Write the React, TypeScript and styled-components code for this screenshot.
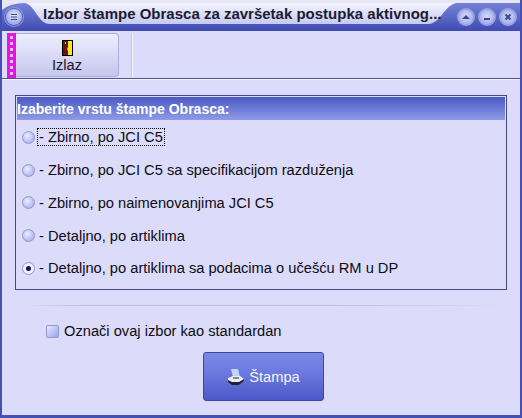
import * as React from 'react';
import styled, { createGlobalStyle } from 'styled-components';

const GlobalStyle = createGlobalStyle`
  html, body { margin: 0; padding: 0; background: #dcdcfa; }
  body { font-family: "Liberation Sans", Arial, sans-serif; color: #000; }
`;

const Window = styled.div`
  width: 522px;
  height: 418px;
  box-sizing: border-box;
  display: flex;
  flex-direction: column;
  background: #dcdcfa;
  border-left: 2px solid #4450b4;
  border-right: 2px solid #4450b4;
  border-bottom: 3px solid #4450b4;
  overflow: hidden;
`;

const TitleBar = styled.div`
  position: relative;
  height: 31px;
  margin: 0 -2px;
  flex: none;
  display: flex;
  align-items: center;
  background: linear-gradient(#7a88dc, #3f4bb0);
`;

const TitleShape = styled.svg`
  position: absolute;
  left: 0;
  top: 0;
`;

const MenuButton = styled.div`
  position: absolute;
  left: 5px;
  top: 8px;
  width: 18px;
  height: 18px;
  border-radius: 50%;
  background: radial-gradient(circle at 50% 40%, #e4e6fa, #9aa5e6 75%);
  border: 1px solid #5c68c4;
  box-shadow: 0 0 0 1px #8d98e2;
  box-sizing: border-box;
  display: flex;
  align-items: center;
  justify-content: center;
`;

const TitleText = styled.div`
  position: relative;
  margin-left: 43px;
  margin-top: -4px;
  font-size: 15px;
  font-weight: bold;
  color: #1c1c30;
  white-space: nowrap;
`;

const Controls = styled.div`
  position: absolute;
  right: 5px;
  top: 8px;
  display: flex;
  gap: 3px;
`;

const ControlButton = styled.div`
  width: 18px;
  height: 18px;
  border-radius: 50%;
  box-sizing: border-box;
  border: 2px solid #98a3e6;
  background: radial-gradient(circle at 50% 45%, #d6d9f6, #a4aeea 80%);
  display: flex;
  align-items: center;
  justify-content: center;
`;

const Toolbar = styled.div`
  flex: none;
  height: 48px;
  display: flex;
  align-items: stretch;
  box-sizing: border-box;
  padding: 2px 0 1px 5px;
  border-bottom: 1px solid #4c5494;
  box-shadow: 0 1px 0 #f2f2ff;
`;

const Grip = styled.svg`
  flex: none;
  width: 9px;
  height: 45px;
  display: block;
`;

const ToolButton = styled.div`
  width: 103px;
  margin-right: 13px;
  box-sizing: border-box;
  border: 1px solid #a9acd8;
  border-left: none;
  border-radius: 0 4px 4px 0;
  background: linear-gradient(#eeeefe, #c6c6ee);
  display: flex;
  flex-direction: column;
  align-items: center;
  font-size: 14.67px;
  padding-top: 6px;
  gap: 1px;
  color: #14142c;
`;

const ToolSeparator = styled.div`
  width: 1px;
  background: #f4f4ff;
  box-shadow: -1px 0 0 #c4c4e6;
`;

const Body = styled.div`
  flex: 1;
  display: flex;
  flex-direction: column;
  padding: 16px 13px 0 13px;
`;

const Group = styled.div`
  height: 195px;
  flex: none;
  box-sizing: border-box;
  border: 1px solid #45497f;
  padding: 1px 1px 0 1px;
`;

const GroupHeader = styled.div`
  height: 23px;
  box-sizing: border-box;
  display: flex;
  align-items: center;
  font-size: 14px;
  font-weight: bold;
  color: #fff;
  background: linear-gradient(#4a58c4, #8f9be8);
`;

const Options = styled.div`
  display: flex;
  flex-direction: column;
  padding: 1px 0 0 5px;
`;

const Option = styled.div`
  height: 32.75px;
  display: flex;
  align-items: center;
  font-size: 14.67px;
  white-space: nowrap;
  color: #0c0c14;
`;

const RadioDot = styled.span<{ $checked?: boolean }>`
  width: 13px;
  height: 13px;
  flex: none;
  margin-right: 3px;
  box-sizing: border-box;
  border-radius: 50%;
  border: 1px solid #8f98cc;
  background: ${p => p.$checked
    ? '#eef0fc'
    : 'radial-gradient(circle at 40% 35%, #eceefc, #a4aef0 85%)'};
  display: flex;
  align-items: center;
  justify-content: center;
  &::after {
    content: '';
    display: ${p => (p.$checked ? 'block' : 'none')};
    width: 5px;
    height: 5px;
    border-radius: 50%;
    background: #14184a;
  }
`;

const OptionLabel = styled.span<{ $focused?: boolean }>`
  outline: ${p => (p.$focused ? '1px dotted #000' : 'none')};
  outline-offset: 0;
  padding: 0 1px;
`;

const Divider = styled.div`
  height: 1px;
  margin: 15px 0 0 12px;
  background: linear-gradient(to right, #dcdcfa, #bcbcd6 12%, #bcbcd6 60%, #dcdcfa);
`;

const CheckRow = styled.div`
  display: flex;
  align-items: center;
  margin: 17px 0 0 31px;
  font-size: 14.67px;
  color: #0c0c14;
`;

const CheckBox = styled.span`
  width: 13px;
  height: 13px;
  margin-right: 5px;
  box-sizing: border-box;
  border: 1px solid #8f98cc;
  border-radius: 2px;
  background: linear-gradient(135deg, #e6e8fc, #98a4ee);
`;

const PrintRow = styled.div`
  display: flex;
  margin: 13px 0 0 188px;
`;

const PrintButton = styled.div`
  width: 121px;
  height: 49px;
  box-sizing: border-box;
  border: 1px solid #3d46a0;
  border-radius: 3px;
  background: linear-gradient(#7c88e6, #6a77de 45%, #4c58c8);
  color: #f4f4ff;
  font-size: 14.67px;
  display: flex;
  align-items: center;
  justify-content: center;
  gap: 4px;
`;

const RADIO_OPTIONS = [
  { label: '- Zbirno, po JCI C5', focused: true },
  { label: '- Zbirno, po JCI C5 sa specifikacijom razduženja' },
  { label: '- Zbirno, po naimenovanjima JCI C5' },
  { label: '- Detaljno, po artiklima' },
  { label: '- Detaljno, po artiklima sa podacima o učešću RM u DP', checked: true },
];

export default function App() {
  return (
    <>
      <GlobalStyle />
      <Window>
        <TitleBar>
          <TitleShape width="522" height="31" viewBox="0 0 522 31">
            <defs>
              <linearGradient id="tab" x1="0" y1="0" x2="0" y2="1">
                <stop offset="0" stopColor="#f4f4fe" />
                <stop offset="1" stopColor="#c6c9f2" />
              </linearGradient>
            </defs>
            {/* pale top edge and the rounded corner of the window */}
            <path d="M0 0H522V3H456L25 3Q8 3 0 12Z" fill="#e6e6f6" />
            {/* the tab the title sits on */}
            <path d="M25 3 L456 3 C444 6 440 24 428 24 L50 24 C38 24 36 6 25 3 Z" fill="url(#tab)" />
          </TitleShape>
          <MenuButton>
            <svg width="8" height="8" viewBox="0 0 8 8">
              <path d="M1 1.5H7M1 4H7M1 6.5H7" stroke="#3c4690" strokeWidth="1" />
            </svg>
          </MenuButton>
          <TitleText>Izbor štampe Obrasca za završetak postupka aktivnog...</TitleText>
          <Controls>
            <ControlButton>
              <svg width="8" height="6" viewBox="0 0 8 6"><path d="M4 1L8 5H0Z" fill="#3c4690" /></svg>
            </ControlButton>
            <ControlButton>
              <svg width="8" height="8" viewBox="0 0 8 8"><path d="M1 6H7" stroke="#3c4690" strokeWidth="2" /></svg>
            </ControlButton>
            <ControlButton>
              <svg width="8" height="8" viewBox="0 0 8 8"><path d="M1.5 1.5L6.5 6.5M6.5 1.5L1.5 6.5" stroke="#3c4690" strokeWidth="2" /></svg>
            </ControlButton>
          </Controls>
        </TitleBar>
        <Toolbar>
          <Grip viewBox="0 0 9 45">
            <rect width="9" height="45" fill="#e414e4" />
            {[3, 9, 15, 21, 27, 33, 39].map(y => (
              <rect key={y} x="3" y={y} width="3" height="3" fill="#f8c8f8" />
            ))}
          </Grip>
          <ToolButton>
            <svg width="11" height="16" viewBox="0 0 11 16">
              <rect x="0" y="0" width="11" height="16" fill="#000" />
              <rect x="1" y="1" width="9" height="14" fill="#f8e81c" />
              <path d="M1 1H6V7L5 9L6 11V15H1Z" fill="#6a1414" />
              <rect x="3" y="2" width="1" height="2" fill="#d0d0d0" />
            </svg>
            <span>Izlaz</span>
          </ToolButton>
          <ToolSeparator />
        </Toolbar>
        <Body>
          <Group>
            <GroupHeader>Izaberite vrstu štampe Obrasca:</GroupHeader>
            <Options>
              {RADIO_OPTIONS.map(o => (
                <Option key={o.label}>
                  <RadioDot $checked={o.checked} />
                  <OptionLabel $focused={o.focused}>{o.label}</OptionLabel>
                </Option>
              ))}
            </Options>
          </Group>
          <Divider />
          <CheckRow>
            <CheckBox />
            Označi ovaj izbor kao standardan
          </CheckRow>
          <PrintRow>
            <PrintButton>
              <svg width="18" height="16" viewBox="0 0 18 16">
                <path d="M4 0H11L13 8H6Z" fill="#bcd8f4" />
                <path d="M1 9L6 7H13L17 10V12L12 15H5L1 12Z" fill="#eeeef4" />
                <path d="M1 11L5 13H12L17 10V12L12 16H5L1 13Z" fill="#20203a" />
                <path d="M6 8H12V10H6Z" fill="#7c8898" />
              </svg>
              Štampa
            </PrintButton>
          </PrintRow>
        </Body>
      </Window>
    </>
  );
}
